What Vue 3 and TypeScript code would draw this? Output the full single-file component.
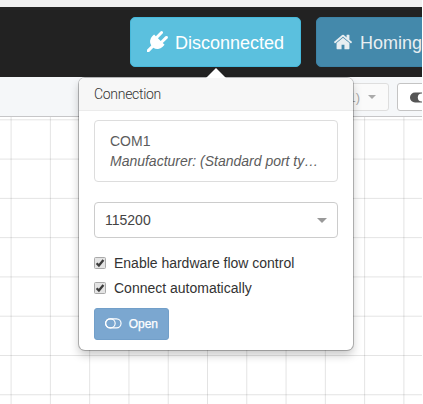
<script setup lang="ts">
import { ref } from 'vue'

const port = ref({ name: 'COM1', manufacturer: 'Manufacturer: (Standard port ty…' })
const baudRate = ref(115200)
const options = ref([
  { label: 'Enable hardware flow control', checked: true, cls: 'flow' },
  { label: 'Connect automatically', checked: true, cls: 'auto' },
])
const columns = Array.from({ length: 11 }, (_, i) => 11.1 + i * 39.28)
const rows = Array.from({ length: 8 }, (_, i) => 2.8 + i * 39.28)
</script>

<template>
  <div class="app">
    <div class="strip"></div>
    <header class="navbar">
      <div class="anchor">
        <button class="nav-btn info">
          <svg class="plug" viewBox="0 0 1792 1792"><path fill="currentColor" d="M1755 453q37 38 37 90.5t-37 90.5l-401 400 150 150-160 160q-163 163-389.500 186.500t-411.500-100.500l-362 362h-181v-181l362-362q-124-185-100.500-411.500t186.500-389.500l160-160 150 150 400-401q38-37 91-37t90 37 37 90.500-37 90.500l-400 401 234 234 401-400q38-37 91-37t90 37z" /></svg>
          <span class="label disconnected">Disconnected</span>
        </button>
        <section class="popover">
          <i class="arrow"></i>
          <h3 class="title"><span>Connection</span></h3>
          <div class="content">
            <div class="port">
              <div class="port-name">{{ port.name }}</div>
              <div class="maker">{{ port.manufacturer }}</div>
            </div>
            <div class="select">
              <span>{{ baudRate }}</span>
              <i class="caret"></i>
            </div>
            <label v-for="o in options" :key="o.label" class="option">
              <svg class="check" viewBox="0 0 12 12" @click="o.checked = !o.checked">
                <rect x=".5" y=".5" width="11" height="11" rx="1" fill="#e4e4e4" stroke="#a9a9a9" />
                <path v-if="o.checked" d="M2.600 6.200L4.900 8.500L9.400 3" fill="none" stroke="#3c3c3c" stroke-width="2.300" />
              </svg>
              <span :class="o.cls">{{ o.label }}</span>
            </label>
            <button class="open">
              <svg viewBox="0 0 17 11" fill="none" stroke="currentColor" stroke-width="1.200">
                <rect x=".6" y=".7" width="15.800" height="9.300" rx="4.650" />
                <ellipse cx="5.500" cy="5.350" rx="4.900" ry="4.650" />
              </svg>
              <span>Open</span>
            </button>
          </div>
        </section>
      </div>
      <button class="nav-btn homing">
        <svg class="home" viewBox="0 0 1792 1792"><path fill="currentColor" d="M1472 992v480q0 26-19 45t-45 19h-384v-384h-256v384h-384q-26 0-45-19t-19-45v-480q0-1 .5-3t.5-3l575-474 575 474q1 2 1 6zm223-69l-62 74q-8 9-21 11h-3q-13 0-21-7l-692-577-692 577q-12 8-24 7-13-2-21-11l-62-74q-8-10-7-23.500t11-21.500l719-599q32-26 76-26t76 26l244 204v-195q0-14 9-23t23-9h192q14 0 23 9t9 23v408l219 182q10 8 11 21.500t-7 23.500z" /></svg>
        <span class="label">Homing</span>
      </button>
    </header>
    <div class="toolbar">
      <button class="tool disabled"><span>1)</span><i class="caret small"></i></button>
      <button class="tool toggle">
        <svg viewBox="0 0 18 11"><rect y=".5" width="17" height="10" rx="5" fill="#555" /><circle cx="11.800" cy="5.500" r="4" fill="#fff" /></svg>
      </button>
    </div>
    <main class="workspace">
      <svg width="423" height="287" stroke="#000" stroke-opacity=".11">
        <line v-for="x in columns" :key="'x' + x" :x1="x" y1="0" :x2="x" y2="287" />
        <line v-for="y in rows" :key="'y' + y" x1="0" :y1="y" x2="423" :y2="y" />
      </svg>
    </main>
  </div>
</template>

<style>
body { margin: 0; overflow: hidden; background: #fff; }
</style>

<style scoped>
* { box-sizing: border-box; }
.app {
  display: flex;
  flex-direction: column;
  width: 422px;
  height: 404px;
  overflow: hidden;
  color: #333;
  font: 14px/20px "Liberation Sans", Arial, sans-serif;
}
button { font-family: inherit; margin: 0; white-space: nowrap; }
.strip { flex: none; height: 7px; background: #efefef; }
.navbar {
  flex: none;
  display: flex;
  gap: 15px;
  height: 70px;
  padding: 10px 0 10px 130px;
  background: #222;
}
.anchor { position: relative; flex: none; width: 171px; height: 50px; }
.nav-btn {
  display: flex;
  flex: none;
  align-items: center;
  height: 50px;
  padding: 0 16px;
  border: 1px solid #46b8da;
  border-radius: 5px;
  color: #fff;
}
.info { width: 171px; background: #5bc0de; }
.homing { width: 150px; background: #4489ab; border-color: #3d83a6; color: #e8eef1; }
.label { font-size: 18px; line-height: 24px; margin-top: 1px; }
.plug { width: 21px; height: 21px; margin: -1px 7px 0 0; }
.home { width: 20px; height: 20px; margin: -1px 7px 0 0; }
.toolbar {
  flex: none;
  display: flex;
  justify-content: flex-end;
  gap: 8px;
  height: 40px;
  padding-top: 6px;
  background: #f5f7f9;
  border-bottom: 1px solid #c6c6c8;
}
.tool {
  display: flex;
  align-items: center;
  height: 28px;
  padding: 0 12px;
  border: 1px solid #c4c4c4;
  border-radius: 3px;
  background: #fff;
}
.disabled {
  justify-content: flex-end;
  width: 90px;
  gap: 8px;
  background: #fafafa;
  border-color: #dedede;
  color: #aaa;
  font-size: 13px;
}
.toggle { flex: none; width: 60px; margin-right: -35px; }
.toggle svg { flex: none; width: 18px; height: 11px; }
.caret { border: 5px solid transparent; border-top-color: #999; border-bottom: 0; }
.small { border-width: 4px 4px 0; border-top-color: #aaa; }
.workspace { flex: 1; overflow: hidden; }
.workspace svg { display: block; }
.popover {
  position: absolute;
  z-index: 2;
  top: 61px;
  left: -51px;
  width: 274px;
  height: 272px;
  border-radius: 6px;
  background: #fff;
  box-shadow: 0 0 0 1px rgba(0,0,0,.25), 0 5px 10px rgba(0,0,0,.22);
}
.arrow {
  position: absolute;
  top: -10px;
  left: 127px;
  border: 10px solid transparent;
  border-top: 0;
  border-bottom-color: #fff;
}
.title {
  display: flex;
  align-items: center;
  height: 33px;
  margin: 0;
  padding: 0 15px;
  border-bottom: 1px solid #ebebeb;
  border-radius: 5px 5px 0 0;
  background: #f7f7f7;
  color: #333;
  font: 300 14px/20px Roboto, sans-serif;
  letter-spacing: -.3px;
}
.content { padding: 9px 15px; }
.port {
  height: 62px;
  padding: 10px 15px;
  border: 1px solid #ddd;
  border-radius: 4px;
  color: #5c5c5c;
}
.maker { white-space: nowrap; font-style: italic; letter-spacing: -.01px; }
.select {
  display: flex;
  align-items: center;
  justify-content: space-between;
  height: 36px;
  margin: 20px 0 15px;
  padding: 0 10px;
  border: 1px solid #ccc;
  border-radius: 4px;
  color: #444;
}
.option { display: flex; align-items: center; height: 20px; margin-bottom: 5px; }
.check { width: 12px; height: 12px; margin-right: 8px; }
.flow { letter-spacing: -.01px; }
.open {
  display: flex;
  align-items: center;
  width: 75px;
  height: 32px;
  margin-top: 10px;
  padding: 0 10px;
  border: 1px solid #729fc9;
  border-radius: 3px;
  background: #7ba7d0;
  color: #fff;
  font-size: 12px;
  -webkit-text-stroke: .25px currentColor;
}
.open svg { width: 17px; height: 11px; margin: -1px 7px 0 0; }
</style>
